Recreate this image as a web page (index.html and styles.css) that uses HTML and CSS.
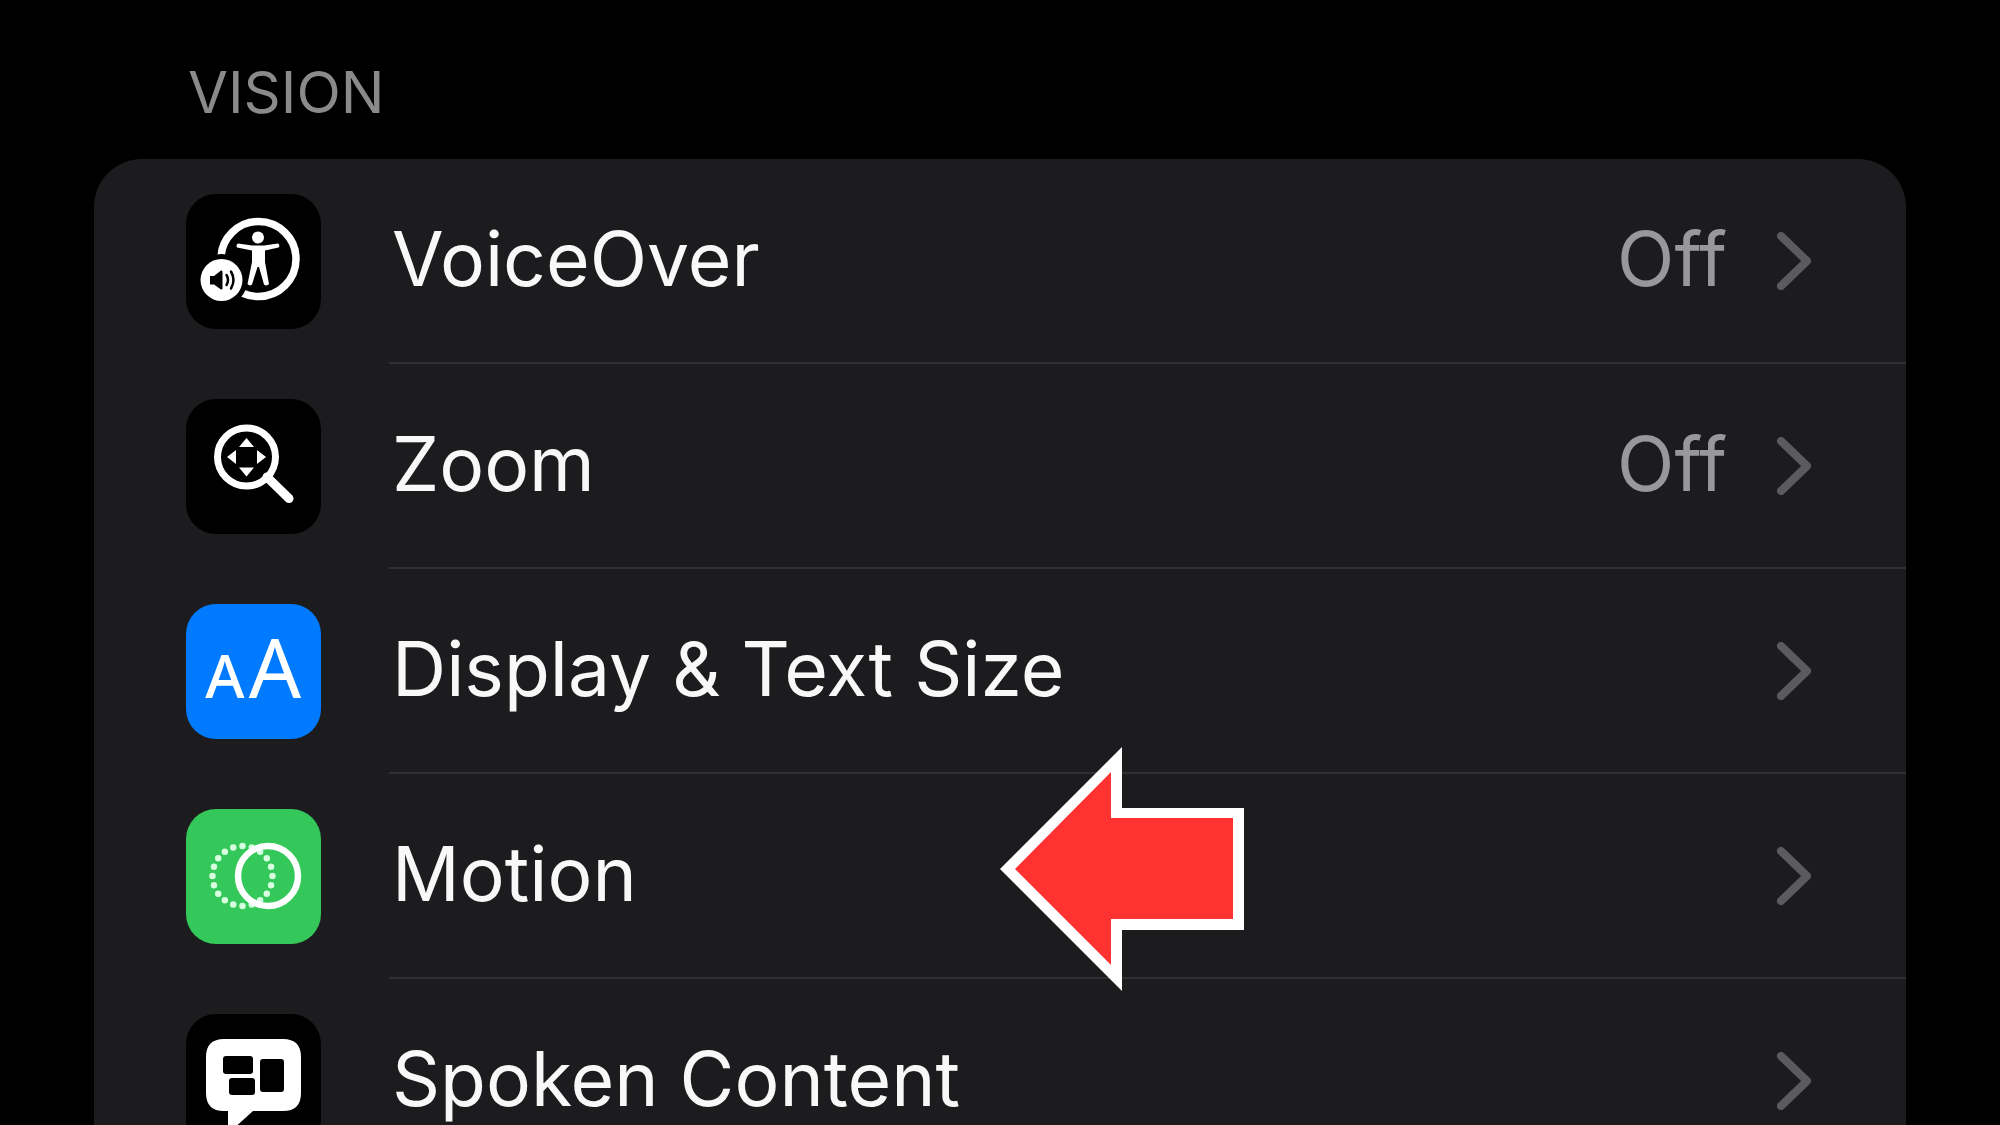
FILE: index.html
```html
<!DOCTYPE html>
<html lang="en">

<head>
  <meta charset="utf-8">
  <title>Accessibility</title>
  <link rel="stylesheet" href="styles.css">
</head>

<body>
  <main class="settings">
    <h2 class="section-title">VISION</h2>

    <ul class="card">
      <li>
        <a class="row" href="#voiceover">
          <svg class="icon icon-black" viewBox="0 0 135 135" aria-hidden="true">
            <circle cx="72.5" cy="65" r="37.5" fill="none" stroke="#fff" stroke-width="7.5"/>
            <circle cx="35.5" cy="86" r="26" fill="#000"/>
            <circle cx="35.5" cy="86" r="21" fill="#fff"/>
            <circle cx="72" cy="43.5" r="6" fill="#fff"/>
            <path d="M52 49.5 L66 51.5 H78 L92 49.5 Q94.500 51 92.500 53.500 L79 56.500 V68 L83 90 Q80.500 92.500 78 90.500 L73 73 H71.500 L66 90.500 Q63.500 92.500 61.500 90 L66 68 V56.500 L51 53.500 Q49.500 51 52 49.500 Z" fill="#fff"/>
            <path d="M24 82 H28 L35 76.500 Q36.500 76 36.500 78 V94 Q36.500 96 35 95.500 L28 90.500 H24 Z"/>
            <path d="M40.500 81 Q43.500 86 40.500 91 M45 77.500 Q50 86 45 94.500" fill="none" stroke="#000" stroke-width="2.500" stroke-linecap="round"/>
          </svg>
          <span class="line"><span class="label">VoiceOver</span><span class="value">Off</span><svg class="chevron" viewBox="0 0 34 58" aria-hidden="true"><path d="M4 4 L30 29 L4 54"/></svg></span>
        </a>
      </li>
      <li>
        <a class="row" href="#zoom">
          <svg class="icon icon-black" viewBox="0 0 135 135" aria-hidden="true">
            <circle cx="60.500" cy="58" r="29" fill="none" stroke="#fff" stroke-width="7"/>
            <path d="M81 78 L103 99.500" stroke="#fff" stroke-width="9" stroke-linecap="round"/>
            <path d="M60.500 39 L68 48 H53 Z M60.500 77.500 L68 68.500 H53 Z M41 58 L50 51 V65 Z M80 58 L71 51 V65 Z" fill="#fff"/>
          </svg>
          <span class="line"><span class="label">Zoom</span><span class="value">Off</span><svg class="chevron" viewBox="0 0 34 58" aria-hidden="true"><path d="M4 4 L30 29 L4 54"/></svg></span>
        </a>
      </li>
      <li>
        <a class="row" href="#display">
          <svg class="icon icon-blue" viewBox="0 0 135 135" aria-hidden="true">
            <text class="letter-small" x="39" y="94">A</text>
            <text class="letter-large" x="89" y="94">A</text>
          </svg>
          <span class="line"><span class="label">Display &amp; Text Size</span><svg class="chevron" viewBox="0 0 34 58" aria-hidden="true"><path d="M4 4 L30 29 L4 54"/></svg></span>
        </a>
      </li>
      <li class="highlighted">
        <a class="row" href="#motion">
          <svg class="icon icon-green" viewBox="0 0 135 135" aria-hidden="true">
            <circle cx="56.500" cy="67" r="30" fill="none" stroke="#d6ffe0" stroke-width="6.500" stroke-linecap="round" pathLength="20" stroke-dasharray="0 1"/>
            <circle cx="82" cy="67" r="30" fill="none" stroke="#fff" stroke-width="6.500"/>
          </svg>
          <span class="line"><span class="label">Motion</span><svg class="chevron" viewBox="0 0 34 58" aria-hidden="true"><path d="M4 4 L30 29 L4 54"/></svg></span>
        </a>
        <svg class="arrow" viewBox="0 0 244 244" aria-hidden="true">
          <path d="M0 122 L122 0 V61 H244 V183 H122 V244 Z" fill="#fff"/>
          <path d="M15 122 L111 25 V71 H233 V172 H111 V218 Z" fill="#ff3131"/>
        </svg>
      </li>
      <li>
        <a class="row" href="#spoken">
          <svg class="icon icon-black" viewBox="0 0 135 135" aria-hidden="true">
            <path d="M38 25 H97 Q115 25 115 43 V79 Q115 97 97 97 H67 L46 116 Q42 118 42 113 V97 H38 Q20 97 20 79 V43 Q20 25 38 25 Z" fill="#fff"/>
            <rect x="37" y="42" width="30" height="18" rx="3"/>
            <rect x="43" y="64" width="26" height="17" rx="3"/>
            <rect x="74" y="45" width="24" height="33" rx="3"/>
          </svg>
          <span class="line"><span class="label">Spoken Content</span><svg class="chevron" viewBox="0 0 34 58" aria-hidden="true"><path d="M4 4 L30 29 L4 54"/></svg></span>
        </a>
      </li>
    </ul>
  </main>
</body>

</html>
```

FILE: styles.css
```css
* {
  box-sizing: border-box;
}

body {
  margin: 0;
  height: 100vh;
  overflow: hidden;
  background-color: #000;
  color: #f8f8f8;
  font-family: Inter, "Liberation Sans", sans-serif;
}

.settings {
  height: 100%;
  padding: 56px 94px 0;
  overflow: hidden;
}

/* Section heading above the card */
.section-title {
  margin: 0 0 31px;
  padding-left: 94px;
  color: #8a8a8d;
  font-size: 58px;
  font-weight: 400;
  line-height: 72px;
}

/* Grouped list */
.card {
  margin: 0;
  padding: 0;
  list-style: none;
  background-color: #1c1c1e;
  border-radius: 48px 48px 0 0;
}

.row {
  display: flex;
  align-items: center;
  gap: 68px;
  padding-left: 92px;
  color: inherit;
  text-decoration: none;
}

.line {
  display: flex;
  flex: 1;
  align-items: center;
  height: 205px;
  padding: 0 95px 0 3px;
  border-bottom: 2px solid #303032;
  font-size: 75px;
  line-height: 92px;
}

.label {
  flex: 1;
  padding-bottom: 4px;
}

.value {
  margin-right: 50px;
  padding-bottom: 4px;
  color: #98989c;
}

.chevron {
  width: 34px;
  height: 58px;
  fill: none;
  stroke: #5b5b5e;
  stroke-width: 8px;
  stroke-linecap: round;
  stroke-linejoin: round;
}

/* Icon tiles */
.icon {
  width: 135px;
  height: 135px;
  border-radius: 30px;
}

.icon-black {
  background-color: #000;
}

.icon-blue {
  background-color: #007aff;
}

.icon-green {
  background-color: #34c759;
}

.letter-small,
.letter-large {
  fill: #fff;
  font-family: "Noto Sans", sans-serif;
  font-weight: 400;
  text-anchor: middle;
}

.letter-small {
  font-size: 60px;
  font-weight: 500;
}

.letter-large {
  font-size: 82px;
}

/* Pointer lying over the highlighted row */
.highlighted {
  position: relative;
}

.arrow {
  position: absolute;
  top: -27px;
  left: 50%;
  width: 244px;
  height: 244px;
}
```
